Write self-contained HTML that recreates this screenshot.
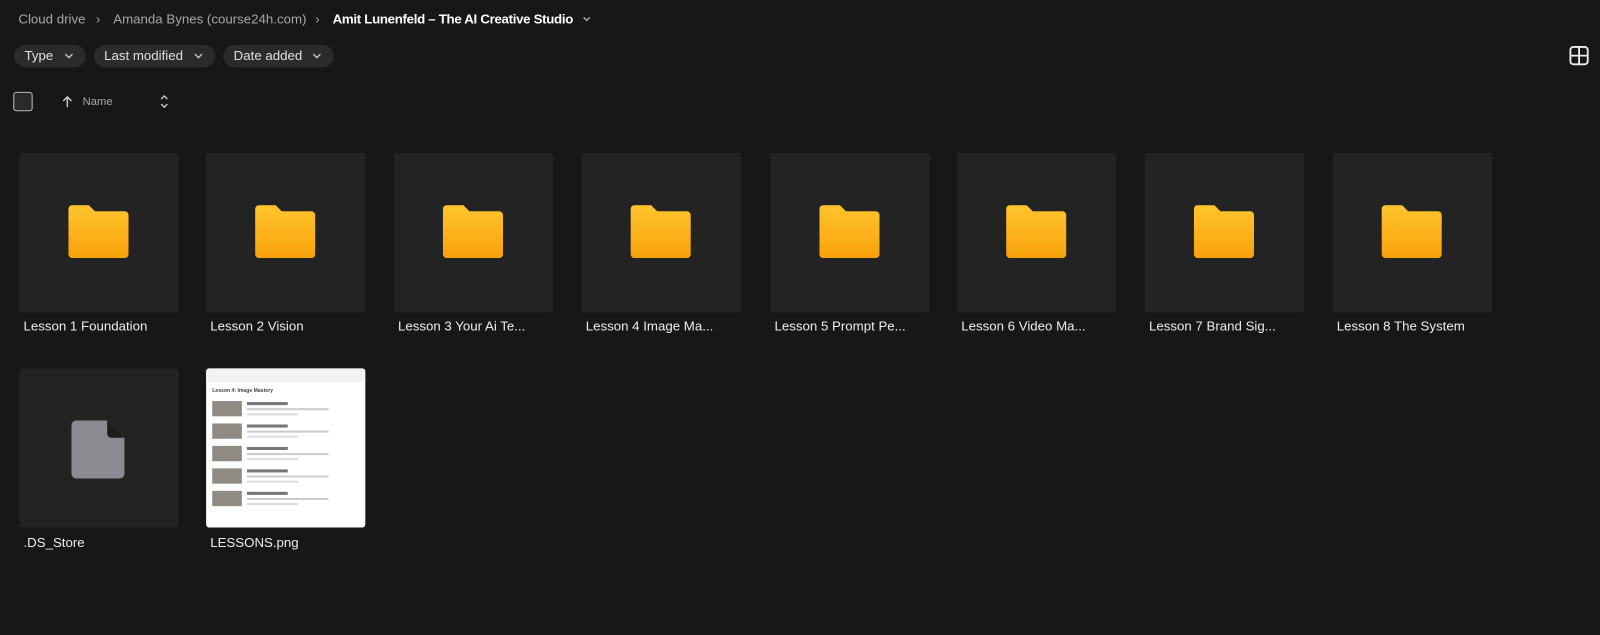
<!DOCTYPE html>
<html><head><style>
body{margin:0;width:1600px;height:635px;background:#161718;font-family:"Liberation Sans",sans-serif;position:relative;overflow:hidden;color:#ddd}
#w{position:absolute;left:0;top:0;width:1568px;height:622px;transform:scale(1.0204);transform-origin:0 0}
.a{position:absolute}
.bc{top:11px;font-size:13px;color:#a8a8a8}
.chip{top:44px;height:22px;border-radius:11px;background:#2a2b2d;color:#e0e0e0;font-size:13px;line-height:22px;padding:0 10px;box-sizing:border-box}
.tile{width:156px;height:156px;background:#232323;border-radius:2px}
.lbl{font-size:13px;color:#eee}
</style></head><body><div id="w">
<div class="a bc" style="left:18px">Cloud drive</div>
<div class="a bc" style="left:94px">›</div>
<div class="a bc" style="left:111px">Amanda Bynes (course24h.com)</div>
<div class="a bc" style="left:309px">›</div>
<div class="a bc" style="left:326px;color:#fff;font-weight:bold;letter-spacing:-0.3px">Amit Lunenfeld – The AI Creative Studio</div>
<svg class="a" style="left:570px;top:15px" width="10" height="8"><path d="M2 2l3 3 3-3" stroke="#bbb" fill="none" stroke-width="1.3"/></svg>
<div class="a chip" style="left:14px;width:70px">Type<svg style="position:absolute;right:12px;top:8px" width="9" height="7"><path d="M1 1l3.5 3.5L8 1" stroke="#ccc" fill="none" stroke-width="1.3"/></svg></div>
<div class="a chip" style="left:92px;width:119px">Last modified<svg style="position:absolute;right:12px;top:8px" width="9" height="7"><path d="M1 1l3.5 3.5L8 1" stroke="#ccc" fill="none" stroke-width="1.3"/></svg></div>
<div class="a chip" style="left:219px;width:108px">Date added<svg style="position:absolute;right:12px;top:8px" width="9" height="7"><path d="M1 1l3.5 3.5L8 1" stroke="#ccc" fill="none" stroke-width="1.3"/></svg></div>
<svg class="a" style="left:1537px;top:44px" width="22" height="22"><rect x="2" y="2" width="17" height="17" rx="3" fill="none" stroke="#eee" stroke-width="1.8"/><path d="M10.5 2v17M2 10.5h17" stroke="#eee" stroke-width="1.8"/></svg>
<div class="a" style="left:13px;top:90px;width:17px;height:17px;border:1.5px solid #bbb;border-radius:3px;background:#2a2a2a"></div>
<svg class="a" style="left:60px;top:93px" width="12" height="13"><path d="M6 12V2M2 6l4-4 4 4" stroke="#ccc" fill="none" stroke-width="1.4"/></svg>
<div class="a" style="left:81px;top:94px;font-size:11px;color:#aaa">Name</div>
<svg class="a" style="left:156px;top:92px" width="10" height="15"><path d="M2 5l3-3 3 3M2 10l3 3 3-3" stroke="#ccc" fill="none" stroke-width="1.3"/></svg>
<div id="g"></div>
</div>
<script>
var xs=[19,202,386,570,755,938,1122,1306];
var names=["Lesson 1 Foundation","Lesson 2 Vision","Lesson 3 Your Ai Te...","Lesson 4 Image Ma...","Lesson 5 Prompt Pe...","Lesson 6 Video Ma...","Lesson 7 Brand Sig...","Lesson 8 The System"];
var h="";
xs.forEach(function(x,i){
h+='<div class="a tile" style="left:'+x+'px;top:150px"></div>';
h+='<svg class="a" style="left:'+(x+48)+'px;top:201px" width="59" height="52"><defs><linearGradient id="f'+i+'" x1="0" y1="0" x2="0" y2="1"><stop offset="0" stop-color="#ffc52e"/><stop offset="1" stop-color="#f9a10b"/></linearGradient></defs><path d="M0 4a4 4 0 0 1 4-4h16l6 6h29a4 4 0 0 1 4 4v38a4 4 0 0 1-4 4H4a4 4 0 0 1-4-4z" fill="url(#f'+i+')"/></svg>';
h+='<div class="a lbl" style="left:'+(x+4)+'px;top:312px">'+names[i]+'</div>';
});
h+='<div class="a tile" style="left:19px;top:361px"></div>';
h+='<svg class="a" style="left:70px;top:412px" width="52" height="57"><path d="M0 5a5 5 0 0 1 5-5h30l17 17v35a5 5 0 0 1-5 5H5a5 5 0 0 1-5-5z" fill="#8a8b91"/><path d="M35 0v13a4 4 0 0 0 4 4h13z" fill="#1d1d1f"/></svg>';
h+='<div class="a lbl" style="left:23px;top:524px">.DS_Store</div>';
h+='<div class="a" style="left:202px;top:361px;width:156px;height:156px;background:#fff;border-radius:3px;overflow:hidden"><div style="height:14px;background:#f3f3f3"></div><div style="position:absolute;left:6px;top:19px;font-size:5px;font-weight:bold;color:#444">Lesson 4: Image Mastery</div>';
for(var k=0;k<5;k++){h+='<div style="position:absolute;left:6px;top:'+(32+k*22)+'px;width:29px;height:15px;background:#8f8a82"></div><div style="position:absolute;left:40px;top:'+(33+k*22)+'px;width:40px;height:3px;background:#777"></div><div style="position:absolute;left:40px;top:'+(39+k*22)+'px;width:80px;height:2px;background:#ccc"></div><div style="position:absolute;left:40px;top:'+(44+k*22)+'px;width:50px;height:2px;background:#ddd"></div>';}
h+='</div><div class="a lbl" style="left:206px;top:524px">LESSONS.png</div>';
document.getElementById("g").innerHTML=h;
</script>
</body></html>
